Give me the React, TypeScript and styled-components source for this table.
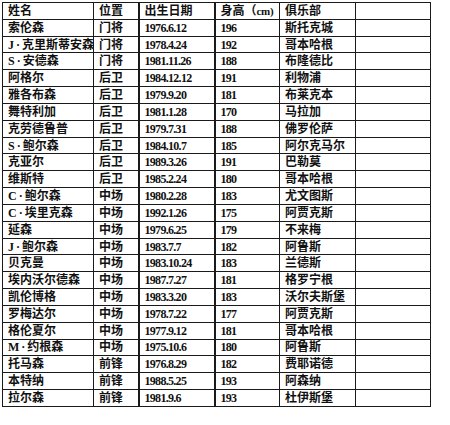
import React from "react";
import styled, { createGlobalStyle } from "styled-components";

const Global = createGlobalStyle`
  html, body { margin: 0; padding: 0; background: #ffffff; }
  body { width: 450px; height: 425px; overflow: hidden; }
`;

const Page = styled.div`
  padding: 2px 0 0 2px;
`;

const Table = styled.table`
  border-collapse: collapse;
  table-layout: fixed;
  width: 428px;
  font-family: "Liberation Serif", "Noto Sans CJK SC", serif;
  font-size: 12px;
  font-weight: 700;
  color: #111;
`;

const Row = styled.tr`
  height: 16.83px;
`;

const Cell = styled.td<{ $thick?: boolean }>`
  border: 1px solid #1a1a1a;
  border-left-width: ${(p) => (p.$thick ? "2px" : "1px")};
  padding: 0 0 0 5px;
  line-height: 14px;
  white-space: nowrap;
  overflow: hidden;
  vertical-align: middle;
`;

const Num = styled.span`
  letter-spacing: -0.7px;
`;

const Small = styled.span`
  font-size: 11px;
  letter-spacing: -0.3px;
`;

const Dot = styled.span`
  margin: 0 2px;
`;

const widths = [91, 45, 76, 65, 76, 75];

const rows: [string, string, string, string, string][] = [
  ["索伦森", "门将", "1976.6.12", "196", "斯托克城"],
  ["J·克里斯蒂安森", "门将", "1978.4.24", "192", "哥本哈根"],
  ["S·安德森", "门将", "1981.11.26", "188", "布隆德比"],
  ["阿格尔", "后卫", "1984.12.12", "191", "利物浦"],
  ["雅各布森", "后卫", "1979.9.20", "181", "布莱克本"],
  ["舞特利加", "后卫", "1981.1.28", "170", "马拉加"],
  ["克劳德鲁普", "后卫", "1979.7.31", "188", "佛罗伦萨"],
  ["S·鲍尔森", "后卫", "1984.10.7", "185", "阿尔克马尔"],
  ["克亚尔", "后卫", "1989.3.26", "191", "巴勒莫"],
  ["维斯特", "后卫", "1985.2.24", "180", "哥本哈根"],
  ["C·鲍尔森", "中场", "1980.2.28", "183", "尤文图斯"],
  ["C·埃里克森", "中场", "1992.1.26", "175", "阿贾克斯"],
  ["延森", "中场", "1979.6.25", "179", "不来梅"],
  ["J·鲍尔森", "中场", "1983.7.7", "182", "阿鲁斯"],
  ["贝克曼", "中场", "1983.10.24", "183", "兰德斯"],
  ["埃内沃尔德森", "中场", "1987.7.27", "181", "格罗宁根"],
  ["凯伦博格", "中场", "1983.3.20", "183", "沃尔夫斯堡"],
  ["罗梅达尔", "中场", "1978.7.22", "177", "阿贾克斯"],
  ["格伦夏尔", "中场", "1977.9.12", "181", "哥本哈根"],
  ["M·约根森", "中场", "1975.10.6", "180", "阿鲁斯"],
  ["托马森", "前锋", "1976.8.29", "182", "费耶诺德"],
  ["本特纳", "前锋", "1988.5.25", "193", "阿森纳"],
  ["拉尔森", "前锋", "1981.9.6", "193", "杜伊斯堡"],
];

function Name({ text }: { text: string }) {
  const parts = text.split("·");
  if (parts.length === 1) return <>{text}</>;
  return (
    <>
      {parts[0]}
      <Dot>·</Dot>
      {parts[1]}
    </>
  );
}

export default function App() {
  return (
    <>
      <Global />
      <Page>
        <Table>
          <colgroup>
            {widths.map((w, i) => (
              <col key={i} style={{ width: w }} />
            ))}
          </colgroup>
          <tbody>
            <Row>
              <Cell>姓名</Cell>
              <Cell>位置</Cell>
              <Cell $thick>出生日期</Cell>
              <Cell $thick>
                身高（<Small>cm)</Small>
              </Cell>
              <Cell>俱乐部</Cell>
              <Cell></Cell>
            </Row>
            {rows.map((r, i) => (
              <Row key={i}>
                <Cell>
                  <Name text={r[0]} />
                </Cell>
                <Cell>{r[1]}</Cell>
                <Cell $thick>
                  <Num>{r[2]}</Num>
                </Cell>
                <Cell $thick>
                  <Num>{r[3]}</Num>
                </Cell>
                <Cell>{r[4]}</Cell>
                <Cell></Cell>
              </Row>
            ))}
          </tbody>
        </Table>
      </Page>
    </>
  );
}
